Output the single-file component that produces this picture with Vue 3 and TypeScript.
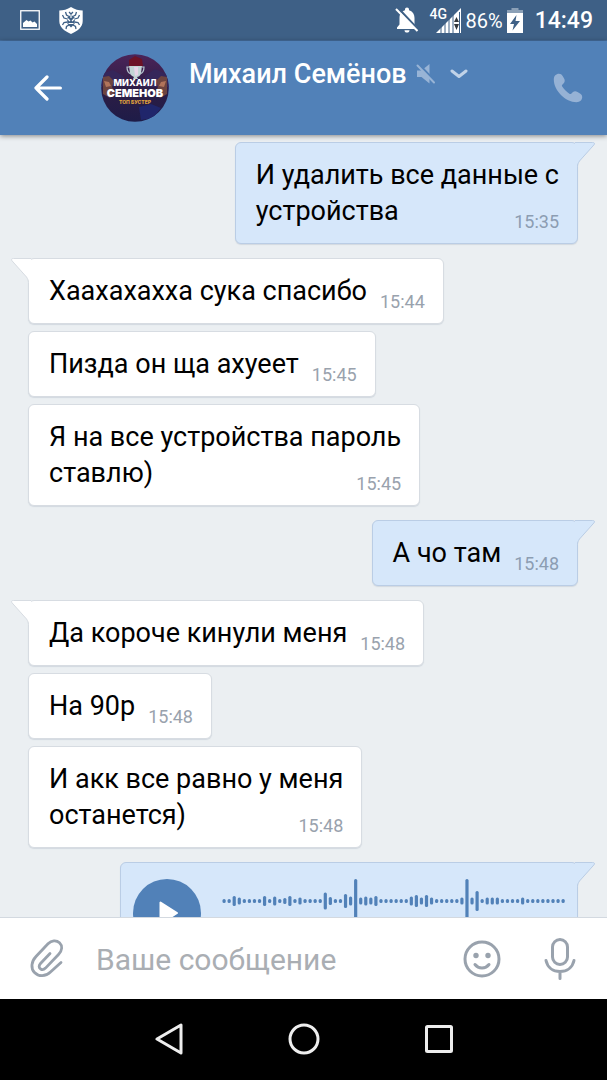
<script setup lang="ts">
import { ref } from 'vue'

interface Message {
  id: number
  own: boolean
  tail: boolean
  time: string
  lines: string[]
}

const messages: Message[] = [
  { id: 1, own: true, tail: true, time: '15:35', lines: ['И удалить все данные с', 'устройства'] },
  { id: 2, own: false, tail: true, time: '15:44', lines: ['Хаахахахха сука спасибо'] },
  { id: 3, own: false, tail: false, time: '15:45', lines: ['Пизда он ща ахуеет'] },
  { id: 4, own: false, tail: false, time: '15:45', lines: ['Я на все устройства пароль', 'ставлю)'] },
  { id: 5, own: true, tail: true, time: '15:48', lines: ['А чо там'] },
  { id: 6, own: false, tail: true, time: '15:48', lines: ['Да короче кинули меня'] },
  { id: 7, own: false, tail: false, time: '15:48', lines: ['На 90р'] },
  { id: 8, own: false, tail: false, time: '15:48', lines: ['И акк все равно у меня', 'останется)'] },
]

const wave: number[] = [
  4, 4, 10, 7, 4, 4, 4, 4, 10, 4, 9, 4, 6, 10, 4, 7, 4, 4, 4, 4, 17, 8, 4, 4, 14, 9, 44,
  7, 9, 7, 10, 4, 4, 4, 4, 4, 4, 9, 12, 7, 12, 7, 4, 4, 4, 4, 4, 7, 44, 7, 20, 4, 7, 7, 7,
  4, 4, 4, 4, 7, 4, 4, 4, 4, 4, 4, 4, 4,
]

const draft = ref('')
</script>

<template>
  <div class="screen">
    <div class="status">
      <svg class="s-image" width="20" height="20" viewBox="0 0 20 20">
        <rect x=".75" y=".75" width="18.5" height="18.5" fill="none" stroke="#fff" stroke-width="1.3" />
        <path d="M3 17v-4l3.500-3 2 1.500 2-1 2 2 2-1 2.500 2.500v3z" fill="#fff" />
      </svg>
      <svg class="s-shield" width="24" height="27" viewBox="0 0 24 27">
        <path d="M12 0C8.500 2.500 4 3.500.3 3.500V14c0 6 5 10 11.700 13 6.700-3 11.700-7 11.700-13V3.500C20 3.500 15.500 2.500 12 0z" fill="#fff" />
        <g fill="none" stroke="#3e6086" stroke-width="1.300">
          <path d="M10 9.500L7.500 8 6.500 5M14 9.500L16.500 8l1-3M8.500 12L5 11 3.500 8M15.500 12l3.500-1 1.500-3M8.500 15L5 15.500 3.500 18M15.500 15l3.500.5 1.500 2.500M10 18l-2.500 1.500-.5 2.500M14 18l2.500 1.500.5 2.500M10 5l2 2 2-2" />
        </g>
        <path d="M12 7.500l4 3.500-.5 6L12 20.500 8.500 17 8 11z" fill="#3e6086" />
        <path d="M8.500 11.500l2.500 2.500M15.500 11.500L13 14M9.500 16.500h5M12 8v3" stroke="#fff" stroke-width="1.200" />
      </svg>
      <span class="spacer"></span>
      <svg class="s-bell" width="24" height="26" viewBox="0 0 24 26">
        <path d="M12 .5c-1.200 0-2 .8-2 2v.7C6.500 4.200 4.500 7.200 4.500 11v6.500L2 20.500v1.500h20v-1.500l-2.500-3V11c0-3.800-2-6.800-5.500-7.800v-.7c0-1.200-.8-2-2-2zM9.500 23.200h5c0 1.400-1 2.300-2.500 2.300s-2.500-.9-2.500-2.300z" fill="#fff" />
        <path d="M3 1l21 22.500" stroke="#3e6086" stroke-width="2.500" />
        <path d="M1 2l21.500 22" stroke="#fff" stroke-width="2" />
      </svg>
      <div class="signal">
        <svg width="25" height="25" viewBox="0 0 25 25">
          <path d="M25 0v25H0z" fill="#fff" />
          <path d="M5 18v7M9 14v11M13 10v15M17 7v18M23.500 4v21" stroke="#3e6086" stroke-width="1" />
          <path d="M20.500 9l2.500 5h-5zM20.500 22l2.500-6h-5z" fill="#33383d" />
        </svg>
        <span class="net">4G</span>
      </div>
      <span class="pct">86%</span>
      <svg class="s-batt" width="16" height="25" viewBox="0 0 16 25">
        <path d="M4.500 0h7v2H16v3H0V2h4.500z" fill="#8ba0b7" />
        <path d="M0 5h16v20H0z" fill="#fff" />
        <path d="M9.500 7L3 16h4l-1.500 6.500L13 13H8.500z" fill="#3e6086" />
      </svg>
      <span class="clock">14:49</span>
    </div>

    <header class="header">
      <button class="icon-btn back" aria-label="Назад">
        <svg width="28" height="26" viewBox="0 0 28 26" fill="none" stroke="#fff" stroke-width="3.200" stroke-linecap="round" stroke-linejoin="round">
          <path d="M26.400 13H2M13 2L2 13l11 11" />
        </svg>
      </button>
      <svg class="avatar" width="68" height="68" viewBox="0 0 68 68" role="img" aria-label="Аватар">
        <defs>
          <clipPath id="avatar-clip"><circle cx="34" cy="34" r="33.800" /></clipPath>
          <linearGradient id="avatar-bg" x1="0" y1="0" x2="0" y2="1">
            <stop offset="0" stop-color="#4b2459" />
            <stop offset=".55" stop-color="#2c1d45" />
            <stop offset="1" stop-color="#1e1c48" />
          </linearGradient>
        </defs>
        <g clip-path="url(#avatar-clip)">
          <rect width="68" height="68" fill="url(#avatar-bg)" />
          <path d="M0 20l12-4 10 6 4 10H0zM44 22l10-7 14 6v12H44z" fill="#35265a" />
          <path d="M28 6l6-4 7 3 1 7H28z" fill="#6c1226" />
          <path d="M2 23l6-1 5 5-2 6 3 6-5 5-7-4zM66 23l-6-1-5 5 2 6-3 6 5 5 7-4z" fill="#6d4440" />
          <path d="M3 27l5 1 2 4-5 1zM65 27l-5 1-2 4 5 1z" fill="#b1745b" />
          <path d="M38 53l12-3 10 4-8 10-12 2z" fill="#20266b" />
          <path d="M28 12h13l-1 7c-.5 3-3 4-4 4l1 2h-5l1-2c-2-1-3.500-2-4-4z" fill="#c3d5d5" />
          <path d="M28 13h-2c0 4 1 6 4 7M41 13h2c0 4-1 6-4 7" fill="none" stroke="#b5c5cf" stroke-width="1.200" />
          <path d="M33 13h4v8l-3 1z" fill="#e8d5e8" />
          <text class="av-first" x="34" y="32" text-anchor="middle">МИХАИЛ</text>
          <text class="av-last" x="34" y="43" text-anchor="middle">СЕМЕНОВ</text>
          <text class="av-role" x="34" y="50" text-anchor="middle">ТОП БУСТЕР</text>
        </g>
      </svg>
      <button class="title">
        <span class="name">Михаил Семёнов</span>
        <svg class="mute" width="20" height="20" viewBox="0 0 20 20">
          <path d="M1 6.500h4.500L13.500 0v19.500L5.500 13H1z" fill="#98b4d6" />
          <path d="M2.500 0L20 18.500" stroke="#5181b8" stroke-width="2.500" />
          <path d="M1.500 1.500L18 18.500" stroke="#98b4d6" stroke-width="2" stroke-linecap="round" />
        </svg>
        <svg class="chev" width="18" height="10" viewBox="0 0 18 10">
          <path d="M2 2l7 5.500L16 2" fill="none" stroke="#c1d3e8" stroke-width="3" stroke-linecap="round" stroke-linejoin="round" />
        </svg>
      </button>
      <button class="icon-btn call" aria-label="Позвонить">
        <svg width="30" height="30" viewBox="0 0 30 30">
          <path d="M6 .8C3 .8.800 3 .8 6.500c0 11 11.700 22.700 22.700 22.700 3.500 0 5.700-2.200 5.700-5.200 0-1.700-.7-2.700-2.200-3.600l-2.500-1.500c-1.800-1-3.500-.8-4.800.4l-1.500 1.400c-.5.5-1.200.5-1.800.1-2.500-1.700-5.500-4.700-7.200-7.200-.4-.6-.4-1.300.1-1.800l1.400-1.500c1.200-1.300 1.400-3 .4-4.800L9.600 3C8.700 1.500 7.700.8 6 .8z" fill="#96b2d5" />
        </svg>
      </button>
    </header>

    <main class="chat">
      <div
        v-for="m in messages"
        :key="m.id"
        class="bubble"
        :class="{ own: m.own, first: m.tail }"
      >
        <svg v-if="m.tail" class="tail" width="20" height="28" viewBox="0 0 20 28">
          <path class="tail-fill" d="M20 .5H2.500c-2 0-2.500 1-1.500 2.300L15.500 19c1.300 2 2 3.500 2 5.500V28H20z" />
          <path class="tail-line" d="M20 .5H2.500c-2 0-2.500 1-1.500 2.300L15.500 19c1.300 2 2 3.500 2 5.500V28" />
        </svg>
        <div v-for="(line, i) in m.lines" :key="i" class="line">
          <span>{{ line }}</span>
          <time v-if="i === m.lines.length - 1">{{ m.time }}</time>
        </div>
      </div>

      <div class="bubble own first voice">
        <svg class="tail" width="20" height="28" viewBox="0 0 20 28">
          <path class="tail-fill" d="M20 .5H2.500c-2 0-2.500 1-1.500 2.300L15.500 19c1.300 2 2 3.500 2 5.500V28H20z" />
          <path class="tail-line" d="M20 .5H2.500c-2 0-2.500 1-1.500 2.300L15.500 19c1.300 2 2 3.500 2 5.500V28" />
        </svg>
        <button class="play" aria-label="Воспроизвести">
          <svg width="20" height="24" viewBox="0 0 20 24">
            <path d="M1.500 1.500v21L18 12z" fill="#fff" stroke="#fff" stroke-width="2" stroke-linejoin="round" />
          </svg>
        </button>
        <svg class="wave" width="344" height="44" viewBox="0 0 344 44">
          <rect
            v-for="(h, i) in wave"
            :key="i"
            :x="0.5 + i * 5.06"
            :y="22 - h / 2"
            width="3.200"
            :height="h"
            rx="1.500"
            fill="#5181b8"
          />
        </svg>
      </div>
    </main>

    <form class="composer" @submit.prevent>
      <button type="button" class="icon-btn clip" aria-label="Прикрепить">
        <svg width="34" height="40" viewBox="0 0 34 40" fill="none" stroke="#99a2ad" stroke-width="2.800" stroke-linecap="round">
          <path d="M20 14.500L10.500 24.500c-1.800 2-1.800 4 0 5.300 1.500 1.200 3.300 1 5-.7L28.500 15.500c4-4.300 4-8.800 1-11.700-3.200-3-8-2.500-11.500 1L6 17.500c-5 5.300-5.300 12-1.500 16 4 4.200 11 4.500 16-.5l10.500-9.500" />
        </svg>
      </button>
      <input v-model="draft" type="text" placeholder="Ваше сообщение" aria-label="Ваше сообщение" />
      <button type="button" class="icon-btn" aria-label="Эмодзи">
        <svg width="38" height="38" viewBox="0 0 38 38" fill="none" stroke="#99a2ad" stroke-width="3">
          <circle cx="19" cy="19" r="17" />
          <path d="M12 24.500c3.500 4.700 10.500 4.700 14 0" stroke-linecap="round" />
          <circle cx="13" cy="15.500" r="2.700" fill="#99a2ad" stroke="none" />
          <circle cx="25" cy="15.500" r="2.700" fill="#99a2ad" stroke="none" />
        </svg>
      </button>
      <button type="button" class="icon-btn mic" aria-label="Голосовое сообщение">
        <svg width="32" height="42" viewBox="0 0 32 42" fill="none" stroke="#99a2ad" stroke-width="3" stroke-linecap="round">
          <rect x="8.500" y="1.500" width="15" height="25" rx="7.500" />
          <path d="M2 22.500c1.500 7 7 11 14 11s12.500-4 14-11M16 34v6.500" />
        </svg>
      </button>
    </form>

    <nav class="nav">
      <button aria-label="Назад">
        <svg width="28" height="32" viewBox="0 0 28 32"><path d="M26 2v28L2 16z" fill="none" stroke="#eee" stroke-width="3" stroke-linejoin="round" /></svg>
      </button>
      <button aria-label="Домой">
        <svg width="32" height="32" viewBox="0 0 32 32"><circle cx="16" cy="16" r="14" fill="none" stroke="#eee" stroke-width="3" /></svg>
      </button>
      <button aria-label="Недавние">
        <svg width="28" height="28" viewBox="0 0 28 28"><rect x="1.500" y="1.500" width="25" height="25" rx="1" fill="none" stroke="#eee" stroke-width="3" /></svg>
      </button>
    </nav>
  </div>
</template>

<style>
body {
  margin: 0;
}
</style>

<style scoped>
.screen {
  display: flex;
  flex-direction: column;
  height: 100vh;
  background: #ebeff2;
  font-family: Roboto, "Noto Sans", sans-serif;
  color: #000;
}

svg {
  display: block;
  flex: none;
}

button {
  padding: 0;
  border: 0;
  background: none;
  font: inherit;
  color: inherit;
  cursor: pointer;
}

.status {
  flex: none;
  display: flex;
  align-items: center;
  box-sizing: border-box;
  height: 41px;
  padding: 0 14px 0 20px;
  border-bottom: 1px solid #466f9f;
  background: #3e6086;
  color: #fff;
}

.s-shield {
  margin-left: 19px;
}

.spacer {
  flex: 1;
}

.signal {
  position: relative;
  margin-left: 12px;
  padding-left: 5px;
}

.net {
  position: absolute;
  top: -1px;
  left: -1px;
  font-size: 14px;
  line-height: 14px;
  font-weight: 500;
}

.pct {
  margin-left: 5px;
  padding-top: 2px;
  font-size: 20px;
  line-height: 24px;
}

.s-batt {
  margin-left: 4px;
}

.clock {
  margin-left: 12px;
  padding-top: 2px;
  font-size: 23px;
  line-height: 28px;
  font-weight: 500;
}

.header {
  position: relative;
  flex: none;
  display: flex;
  align-items: center;
  box-sizing: border-box;
  height: 94px;
  padding: 0 24px 0 34px;
  background: #5181b8;
  box-shadow: 0 1px 5px rgba(0, 0, 0, 0.45);
}

.avatar {
  margin-left: 39px;
}

.av-first,
.av-last,
.av-role {
  font-family: Inter, Roboto, sans-serif;
  font-weight: 800;
  fill: #fff;
}

.av-first {
  font-size: 9px;
}

.av-last {
  font-size: 11px;
  font-weight: 900;
}

.av-role {
  font-size: 5px;
  fill: #e3a53c;
}

.title {
  flex: 1;
  display: flex;
  align-items: center;
  min-width: 0;
  margin-left: 20px;
  padding-bottom: 28px;
  color: #fff;
}

.name {
  font-size: 27px;
  line-height: 36px;
  font-weight: 500;
  white-space: nowrap;
}

.mute {
  margin-left: 9px;
}

.chev {
  margin-left: 14px;
}

.chat {
  flex: 1;
  min-height: 0;
  display: flex;
  flex-direction: column;
  align-items: flex-start;
  gap: 7px;
  padding: 7px 29px 7px 28px;
  overflow-y: auto;
  scrollbar-width: none;
}

.bubble {
  position: relative;
  flex: none;
  box-sizing: border-box;
  padding: 14px 18px 14px 20px;
  border: 1px solid #d7dce2;
  border-radius: 6px;
  background: #fff;
  box-shadow: 0 1px 1px rgba(100, 120, 145, 0.18);
  font-size: 27px;
  line-height: 36px;
}

.bubble.own {
  align-self: flex-end;
  border-color: #bacde5;
  background: #d6e7fa;
}

.bubble.first:not(:first-child) {
  margin-top: 7px;
}

.line {
  display: flex;
  align-items: flex-end;
  justify-content: space-between;
  gap: 13px;
}

.line span {
  white-space: nowrap;
}

time {
  font-size: 18px;
  line-height: 14px;
  color: #99a2ad;
}

.own time {
  color: #8c9db2;
}

.tail {
  position: absolute;
  top: -1px;
  left: -18px;
}

.own .tail {
  left: auto;
  right: -18px;
  transform: scaleX(-1);
}

.tail-fill {
  fill: #fff;
}

.tail-line {
  fill: none;
  stroke: #d7dce2;
}

.own .tail-fill {
  fill: #d6e7fa;
}

.own .tail-line {
  stroke: #bacde5;
}

.voice {
  display: flex;
  align-items: flex-start;
  gap: 21px;
  padding: 16px 11px 16px 12px;
}

.play {
  display: flex;
  align-items: center;
  justify-content: center;
  box-sizing: border-box;
  width: 68px;
  height: 68px;
  padding-left: 4px;
  border-radius: 50%;
  background: #5181b8;
}

.composer {
  position: relative;
  flex: none;
  display: flex;
  align-items: center;
  box-sizing: border-box;
  height: 82px;
  padding: 0 31px 0 30px;
  border-top: 1px solid #d3d9e0;
  background: #fff;
}

.composer input {
  flex: 1;
  min-width: 0;
  margin: 0 20px 0 32px;
  padding: 2px 0 0;
  border: 0;
  outline: 0;
  background: none;
  font: inherit;
  font-size: 30px;
  line-height: 40px;
}

.composer input::placeholder {
  color: #aaaeb3;
  opacity: 1;
}

.mic {
  margin-left: 43px;
}

.nav {
  flex: none;
  display: flex;
  justify-content: center;
  box-sizing: border-box;
  height: 81px;
  padding-bottom: 2px;
  background: #000;
}

.nav button {
  display: flex;
  align-items: center;
  justify-content: center;
  width: 135px;
}
</style>
